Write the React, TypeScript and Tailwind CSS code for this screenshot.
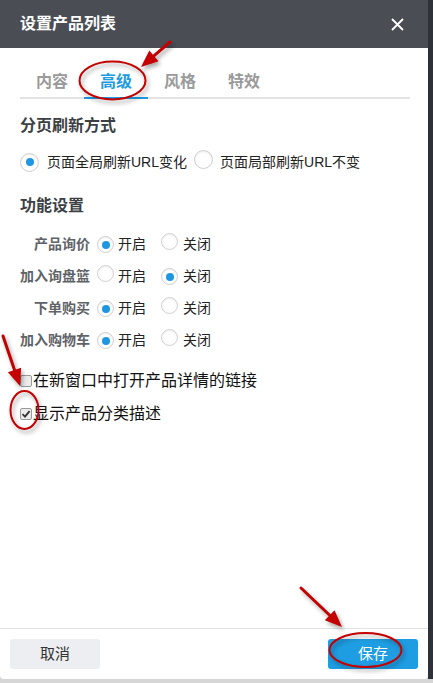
import React from "react";

const FONT = { fontFamily: '"Liberation Sans", "Noto Sans CJK SC", sans-serif' };

// red annotation arrow: a line plus a filled head at the tip
function Arrow({ x1, y1, x2, y2 }: { x1: number; y1: number; x2: number; y2: number }) {
	const dx = x2 - x1;
	const dy = y2 - y1;
	const len = Math.sqrt(dx * dx + dy * dy);
	const ux = dx / len;
	const uy = dy / len;
	const headLen = 17;
	const headW = 7;
	const bx = x2 - ux * headLen;
	const by = y2 - uy * headLen;
	const pts = `${x2},${y2} ${bx - uy * headW},${by + ux * headW} ${bx + uy * headW},${by - ux * headW}`;
	return (
		<g>
			<line x1={x1} y1={y1} x2={bx} y2={by} stroke="#c40000" strokeWidth={3} strokeLinecap="round" />
			<polygon points={pts} fill="#c40000" />
		</g>
	);
}

function Radio({ checked, size = 17 }: { checked?: boolean; size?: number }) {
	return (
		<span
			className="inline-flex shrink-0 items-center justify-center rounded-full border border-[#cfcfcf] bg-white shadow-[inset_0_1px_2px_rgba(0,0,0,0.08)]"
			style={{ width: size, height: size }}
		>
			{checked && <span className="h-[8px] w-[8px] rounded-full bg-[#1e96e0]" />}
		</span>
	);
}

function OnOffRow({ label, on }: { label: string; on: boolean }) {
	return (
		<div className="flex h-[32px] items-center text-[14px]">
			<span className="w-[70px] text-right font-bold text-[#5f6368]">{label}</span>
			<span className="ml-[7px]"><Radio checked={on} /></span>
			<span className="ml-[4px] text-[#222]">开启</span>
			<span className="ml-[15px]"><Radio checked={!on} /></span>
			<span className="ml-[5px] text-[#222]">关闭</span>
		</div>
	);
}

function Check({ checked }: { checked?: boolean }) {
	return (
		<span className="flex h-[12px] w-[12px] shrink-0 items-center justify-center rounded-[2px] border border-[#9a9a9a] bg-[#ececec]">
			{checked && (
				<svg width="10" height="10" viewBox="0 0 10 10">
					<path d="M1.5 5.2 L4 7.6 L8.6 2.2" fill="none" stroke="#333" strokeWidth="1.8" />
				</svg>
			)}
		</span>
	);
}

export default function App() {
	const tabs = ["内容", "高级", "风格", "特效"];
	return (
		<div className="relative flex h-[683px] w-[433px] flex-col overflow-hidden bg-[#d6d6d6]" style={FONT}>
			<div className="flex h-[679px]">
				<div className="flex w-[428px] flex-col overflow-hidden rounded-b-[4px] bg-white">
					<div className="flex h-[48px] shrink-0 items-center justify-between bg-[#4b4d55] pl-[20px] pr-[24px]">
						<div className="text-[16px] font-bold text-white">设置产品列表</div>
						<svg width="13" height="13" viewBox="0 0 13 13">
							<path d="M1 1 L12 12 M12 1 L1 12" stroke="#fff" strokeWidth="1.8" />
						</svg>
					</div>
					<div className="flex flex-1 flex-col px-[20px]">
						<div className="mt-[19px] flex w-[390px] border-b-2 border-[#e3e3e3]">
							{tabs.map((t, i) => (
								<div
									key={t}
									className={
										i === 1
											? "-mb-[2px] border-b-2 border-[#1e9be0] px-[16px] text-[16px] font-bold leading-[30px] text-[#1e9be0]"
											: "px-[16px] text-[16px] font-bold leading-[30px] text-[#9a9a9a]"
									}
								>
									{t}
								</div>
							))}
						</div>
						<div className="mt-[15px] text-[16px] font-bold leading-[24px] text-[#3c3f44]">分页刷新方式</div>
						<div className="mt-[13px] flex h-[22px] items-center text-[14px] text-[#222]">
							<Radio checked size={19} />
							<span className="ml-[8px]">页面全局刷新URL变化</span>
							<span className="ml-[7px]"><Radio size={19} /></span>
							<span className="ml-[7px]">页面局部刷新URL不变</span>
						</div>
						<div className="mt-[21px] text-[16px] font-bold leading-[24px] text-[#3c3f44]">功能设置</div>
						<div className="mt-[10px] flex flex-col">
							<OnOffRow label="产品询价" on />
							<OnOffRow label="加入询盘篮" on={false} />
							<OnOffRow label="下单购买" on />
							<OnOffRow label="加入购物车" on />
						</div>
						<div className="mt-[12px] flex h-[26px] items-center gap-[1px] text-[16px] text-[#111]">
							<Check />
							<span>在新窗口中打开产品详情的链接</span>
						</div>
						<div className="mt-[7px] flex h-[26px] items-center gap-[1px] text-[16px] text-[#111]">
							<Check checked />
							<span>显示产品分类描述</span>
						</div>
					</div>
					<div className="flex h-[51px] shrink-0 items-center justify-between border-t border-[#e3e3e3] px-[10px]">
						<button className="h-[30px] w-[90px] rounded-[3px] bg-[#eceef1] text-[15px] text-[#333]">取消</button>
						<button className="h-[30px] w-[90px] rounded-[3px] bg-[#1e9de2] text-[15px] text-white">保存</button>
					</div>
				</div>
				<div className="flex-1 bg-[#2e3238]" />
			</div>
			<svg
				className="pointer-events-none absolute left-0 top-0"
				width="433"
				height="683"
				style={{ filter: "drop-shadow(2px 3px 2px rgba(0,0,0,0.35))" }}
			>
				<Arrow x1={170} y1={42} x2={141} y2={67} />
				<ellipse cx={112.5} cy={80.5} rx={33} ry={19} fill="none" stroke="#c40000" strokeWidth={2} />
				<Arrow x1={3} y1={336} x2={20} y2={386} />
				<ellipse cx={24.5} cy={410} rx={14} ry={19} fill="none" stroke="#c40000" strokeWidth={2} />
				<Arrow x1={301} y1={588} x2={342} y2={627} />
				<ellipse cx={365.5} cy={650} rx={36} ry={17} fill="none" stroke="#c40000" strokeWidth={2} />
			</svg>
		</div>
	);
}
